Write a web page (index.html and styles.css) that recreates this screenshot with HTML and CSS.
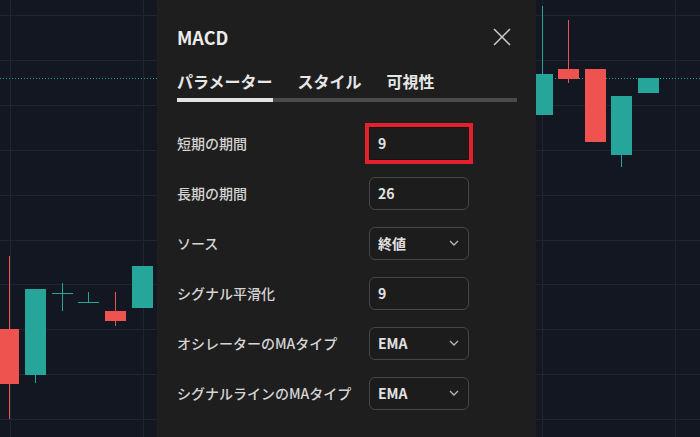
FILE: index.html
```html
<!DOCTYPE html>
<html lang="ja">
<head>
    <meta charset="UTF-8">
    <meta name="viewport" content="width=device-width, initial-scale=1.0">
    <title>MACD</title>
    <link rel="stylesheet" href="styles.css">
</head>
<body>
    <svg class="chart" width="700" height="437" viewBox="0 0 700 437">
        <g class="grid">
            <line x1="10.5" y1="0" x2="10.5" y2="437"/>
            <line x1="143.5" y1="0" x2="143.5" y2="437"/>
            <line x1="276.5" y1="0" x2="276.5" y2="437"/>
            <line x1="409.5" y1="0" x2="409.5" y2="437"/>
            <line x1="542.5" y1="0" x2="542.5" y2="437"/>
            <line x1="675.5" y1="0" x2="675.5" y2="437"/>
            <line x1="0" y1="15.5" x2="700" y2="15.5"/>
            <line x1="0" y1="60.5" x2="700" y2="60.5"/>
            <line x1="0" y1="105.5" x2="700" y2="105.5"/>
            <line x1="0" y1="150.5" x2="700" y2="150.5"/>
            <line x1="0" y1="195.5" x2="700" y2="195.5"/>
            <line x1="0" y1="240.5" x2="700" y2="240.5"/>
            <line x1="0" y1="284.5" x2="700" y2="284.5"/>
            <line x1="0" y1="329.5" x2="700" y2="329.5"/>
            <line x1="0" y1="374.5" x2="700" y2="374.5"/>
            <line x1="0" y1="419.5" x2="700" y2="419.5"/>
        </g>
        <line class="price-line" x1="0" y1="78.5" x2="700" y2="78.5"/>

        <!-- left side candles -->
        <g class="down">
            <line x1="9.5" y1="256" x2="9.5" y2="419"/>
            <rect x="0" y="329" width="19" height="55"/>
            <line x1="115.5" y1="292" x2="115.5" y2="326"/>
            <rect x="105" y="311" width="21" height="10"/>
        </g>
        <g class="up">
            <line x1="35.5" y1="375" x2="35.5" y2="383"/>
            <rect x="25" y="289" width="21" height="86"/>
            <line x1="52" y1="293.5" x2="73" y2="293.5"/>
            <line x1="62.5" y1="283" x2="62.5" y2="311"/>
            <line x1="78" y1="302.5" x2="99" y2="302.5"/>
            <line x1="88.5" y1="292" x2="88.5" y2="302"/>
            <rect x="132" y="266" width="21" height="42"/>
        </g>

        <!-- right side candles -->
        <g class="up">
            <line x1="542.5" y1="6" x2="542.5" y2="74"/>
            <rect x="532" y="74" width="21" height="41"/>
            <line x1="621.5" y1="155" x2="621.5" y2="167"/>
            <rect x="611" y="96" width="21" height="59"/>
            <rect x="638" y="78" width="21" height="15"/>
        </g>
        <g class="down">
            <line x1="568.5" y1="20" x2="568.5" y2="83"/>
            <rect x="558" y="69" width="21" height="10"/>
            <rect x="585" y="69" width="21" height="73"/>
        </g>
    </svg>

    <div class="dialog">
        <div class="dialog-header">
            <span class="dialog-title">MACD</span>
            <svg class="close" width="18" height="18" viewBox="0 0 18 18">
                <path d="M1 1 L17 17 M17 1 L1 17"/>
            </svg>
        </div>

        <div class="tabs">
            <span class="tab active">パラメーター</span>
            <span class="tab">スタイル</span>
            <span class="tab">可視性</span>
        </div>

        <div class="rows">
            <div class="row">
                <span class="label">短期の期間</span>
                <div class="field marked">9</div>
            </div>
            <div class="row">
                <span class="label">長期の期間</span>
                <div class="field">26</div>
            </div>
            <div class="row">
                <span class="label">ソース</span>
                <div class="field select">終値
                    <svg class="chevron" width="10" height="6" viewBox="0 0 10 6"><path d="M1 1 L5 5 L9 1"/></svg>
                </div>
            </div>
            <div class="row">
                <span class="label">シグナル平滑化</span>
                <div class="field">9</div>
            </div>
            <div class="row">
                <span class="label">オシレーターのMAタイプ</span>
                <div class="field select">EMA
                    <svg class="chevron" width="10" height="6" viewBox="0 0 10 6"><path d="M1 1 L5 5 L9 1"/></svg>
                </div>
            </div>
            <div class="row">
                <span class="label">シグナルラインのMAタイプ</span>
                <div class="field select">EMA
                    <svg class="chevron" width="10" height="6" viewBox="0 0 10 6"><path d="M1 1 L5 5 L9 1"/></svg>
                </div>
            </div>
        </div>
    </div>
</body>
</html>
```

FILE: styles.css
```css
body {
    margin: 0;
    width: 700px;
    height: 437px;
    overflow: hidden;
    position: relative;
    background-color: #131722;
    font-family: "Noto Sans CJK JP", "Noto Sans", sans-serif;
    color: #d6d6d6;
}

/* chart canvas behind the dialog */
.chart {
    position: absolute;
    left: 0;
    top: 0;
}

.grid line {
    stroke: #1f2432;
    stroke-width: 1;
}

.price-line {
    stroke: #2a9d93;
    stroke-width: 1;
    stroke-dasharray: 1 2;
}

.up rect {
    fill: #26a69a;
}

.up line {
    stroke: #26a69a;
    stroke-width: 1;
}

.down rect {
    fill: #ef5350;
}

.down line {
    stroke: #ef5350;
    stroke-width: 1;
}

/* dialog */
.dialog {
    position: relative;
    margin-left: 157px;
    width: 379px;
    height: 437px;
    box-sizing: border-box;
    padding: 0 19px 0 20px;
    background-color: #1e1e1e;
}

.dialog-header {
    display: flex;
    justify-content: space-between;
    align-items: center;
    padding-top: 24px;
    height: 26px;
}

.dialog-title {
    font-size: 18px;
    font-weight: 700;
    line-height: 26px;
    color: #ececec;
}

.close {
    margin-right: 6px;
}

.close path {
    stroke: #cfcfcf;
    stroke-width: 1.5;
    fill: none;
}

.tabs {
    display: flex;
    gap: 25px;
    margin-top: 19px;
    box-shadow: inset 0 -4px 0 #4b4b4b;
}

.tab {
    font-size: 16px;
    font-weight: 700;
    line-height: 24px;
    padding-bottom: 5px;
    border-bottom: 4px solid transparent;
    color: #e6e6e6;
}

.tab.active {
    border-bottom-color: #e2e2e2;
}

.rows {
    margin-top: 16px;
}

.row {
    display: flex;
    align-items: center;
    height: 50px;
}

.label {
    width: 192px;
    font-size: 14px;
    font-weight: 500;
    color: #d4d4d4;
}

.field {
    width: 100px;
    height: 33px;
    box-sizing: border-box;
    display: flex;
    align-items: center;
    justify-content: space-between;
    padding: 0 9px 0 8px;
    border: 1px solid #474747;
    border-radius: 6px;
    background-color: #1c1c1c;
    font-size: 14px;
    font-weight: 700;
    color: #e2e2e2;
}

.field.marked {
    border-color: #151515;
    border-radius: 0;
    outline: 4px solid #e3202b;
    outline-offset: 0;
}

.chevron path {
    stroke: #b8b8b8;
    stroke-width: 1.3;
    fill: none;
}
```
